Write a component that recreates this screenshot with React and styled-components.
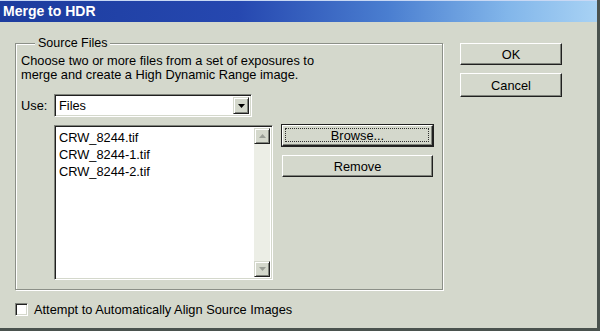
import React from 'react';
import styled, { createGlobalStyle } from 'styled-components';

const GlobalStyle = createGlobalStyle`
  html, body {
    margin: 0;
    padding: 0;
    background: #d4d8cc;
  }
  body {
    font-family: "Liberation Sans", Arial, sans-serif;
    font-size: 12px;
    color: #000;
  }
`;

const Window = styled.div`
  width: 600px;
  height: 331px;
  box-sizing: border-box;
  background: #d4d8cc;
  border-right: 3px solid #4a524e;
  border-bottom: 3px solid #4a524e;
  display: flex;
  flex-direction: column;
  overflow: hidden;
`;

const TitleBar = styled.div`
  height: 22px;
  flex-shrink: 0;
  border-top: 1px solid #c8d8f4;
  background: linear-gradient(90deg, #1c3c9e 0%, #2648b0 40%, #4a7ed0 65%, #82b6ea 85%, #a8d2f4 100%);
  color: #fff;
  font-weight: bold;
  font-size: 14px;
  line-height: 20px;
  padding-left: 3px;
  box-sizing: border-box;
`;

const Body = styled.div`
  flex: 1;
  display: flex;
  gap: 17px;
  padding: 14px 0 0 15px;
`;

const LeftColumn = styled.div`
  display: flex;
  flex-direction: column;
`;

const Group = styled.fieldset`
  width: 428px;
  height: 254px;
  box-sizing: border-box;
  margin: 0;
  padding: 4px 0 0 5px;
  border: 1px solid #8c9088;
  box-shadow: inset 1px 1px 0 #fff, 1px 1px 0 #fff;
`;

const Legend = styled.legend`
  margin-left: 14px;
  padding: 0 3px;
  background: #d4d8cc;
  font-size: 12.5px;
  line-height: 14px;
`;

const Description = styled.p`
  margin: 0;
  font-size: 12.8px;
  line-height: 14px;
`;

const Grid = styled.div`
  margin-top: 12px;
  display: grid;
  grid-template-columns: 24px 219px 151px;
  column-gap: 9px;
  row-gap: 8px;
  align-items: center;
`;

const Label = styled.span`
  font-size: 12.8px;
`;

const Sunken = styled.div`
  box-sizing: border-box;
  background: #fff;
  border-top: 1px solid #80847c;
  border-left: 1px solid #80847c;
  border-bottom: 1px solid #fff;
  border-right: 1px solid #fff;
  box-shadow: inset 1px 1px 0 #202020, inset -1px -1px 0 #d4d8cc;
`;

const Select = styled(Sunken)`
  grid-column: 2 / span 2;
  width: 198px;
  height: 23px;
  display: flex;
  align-items: stretch;
  padding: 2px;
`;

const SelectText = styled.span`
  flex: 1;
  font-size: 12.8px;
  line-height: 17px;
  padding-left: 2px;
`;

const ArrowButton = styled.div`
  width: 16px;
  box-sizing: border-box;
  background: #d4d8cc;
  border-top: 1px solid #d4d8cc;
  border-left: 1px solid #d4d8cc;
  border-right: 1px solid #202020;
  border-bottom: 1px solid #202020;
  box-shadow: inset 1px 1px 0 #fff, inset -1px -1px 0 #80847c;
  display: flex;
  align-items: center;
  justify-content: center;
`;

const ListBox = styled(Sunken)`
  grid-column: 2;
  grid-row: 2 / span 2;
  align-self: start;
  height: 155px;
  display: flex;
  padding: 2px;
`;

const Items = styled.div`
  flex: 1;
  padding-top: 1px;
`;

const Item = styled.div`
  font-size: 12.8px;
  line-height: 17px;
  padding-left: 2px;
`;

const ScrollBar = styled.div`
  width: 16px;
  background: #eceee6;
  display: flex;
  flex-direction: column;
  justify-content: space-between;
`;

const ScrollButton = styled(ArrowButton)`
  height: 16px;
  width: 16px;
`;

const Button = styled.button`
  box-sizing: border-box;
  width: ${(p) => p.$w || 151}px;
  height: ${(p) => p.$h || 22}px;
  margin: 0;
  padding: 0;
  font-family: "Liberation Sans", Arial, sans-serif;
  font-size: 12.8px;
  color: #000;
  background: #d4d8cc;
  border: none;
  border-top: 1px solid #fff;
  border-left: 1px solid #fff;
  border-right: 1px solid #202020;
  border-bottom: 1px solid #202020;
  box-shadow: inset -1px -1px 0 #80847c;
  outline: ${(p) => (p.$default ? '1px solid #202020' : 'none')};
  position: relative;
`;

const FocusRing = styled.span`
  position: absolute;
  inset: 2px 3px 3px 2px;
  border: 1px dotted #303030;
`;

const ButtonColumn = styled.div`
  grid-column: 3;
  align-self: start;
  display: flex;
  flex-direction: column;
  gap: 9px;
`;

const RightColumn = styled.div`
  display: flex;
  flex-direction: column;
  gap: 8px;
  padding-top: 7px;
`;

const CheckRow = styled.label`
  margin-top: 12px;
  display: flex;
  align-items: center;
  gap: 6px;
  font-size: 12.8px;
`;

const CheckBox = styled.span`
  width: 13px;
  height: 13px;
  box-sizing: border-box;
  background: #fff;
  border-top: 1px solid #80847c;
  border-left: 1px solid #80847c;
  border-bottom: 1px solid #fff;
  border-right: 1px solid #fff;
  box-shadow: inset 1px 1px 0 #202020, inset -1px -1px 0 #d4d8cc;
`;

function Arrow({ dir = 'down', color = '#000' }) {
  const d = dir === 'down' ? 'M0 0 H7 L3.5 4 Z' : 'M0 4 H7 L3.5 0 Z';
  return (
    <svg width="7" height="4" viewBox="0 0 7 4">
      <path d={d} fill={color} />
    </svg>
  );
}

export default function App() {
  return (
    <>
      <GlobalStyle />
      <Window>
        <TitleBar>Merge to HDR</TitleBar>
        <Body>
          <LeftColumn>
            <Group>
              <Legend>Source Files</Legend>
              <Description>
                Choose two or more files from a set of exposures to
                <br />
                merge and create a High Dynamic Range image.
              </Description>
              <Grid>
                <Label>Use:</Label>
                <Select>
                  <SelectText>Files</SelectText>
                  <ArrowButton>
                    <Arrow dir="down" />
                  </ArrowButton>
                </Select>
                <ListBox>
                  <Items>
                    <Item>CRW_8244.tif</Item>
                    <Item>CRW_8244-1.tif</Item>
                    <Item>CRW_8244-2.tif</Item>
                  </Items>
                  <ScrollBar>
                    <ScrollButton>
                      <Arrow dir="up" color="#9a9e96" />
                    </ScrollButton>
                    <ScrollButton>
                      <Arrow dir="down" color="#9a9e96" />
                    </ScrollButton>
                  </ScrollBar>
                </ListBox>
                <ButtonColumn>
                  <Button $default $h={21}>
                    <FocusRing />
                    Browse...
                  </Button>
                  <Button>Remove</Button>
                </ButtonColumn>
              </Grid>
            </Group>
            <CheckRow>
              <CheckBox />
              Attempt to Automatically Align Source Images
            </CheckRow>
          </LeftColumn>
          <RightColumn>
            <Button $w={102}>OK</Button>
            <Button $w={102} $h={24}>Cancel</Button>
          </RightColumn>
        </Body>
      </Window>
    </>
  );
}
